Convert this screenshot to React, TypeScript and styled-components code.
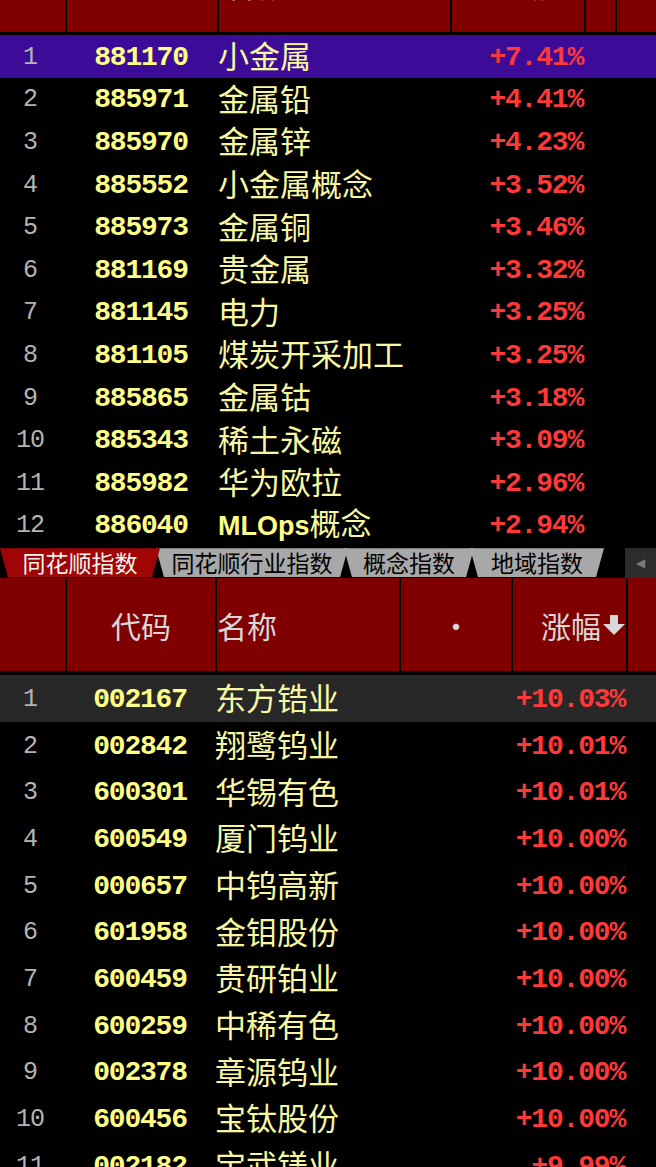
import styled, { createGlobalStyle } from 'styled-components';

const GlobalStyle = createGlobalStyle`
  html, body {
    margin: 0;
    padding: 0;
    background: #000;
    overflow: hidden;
  }
`;

const TOP_COLS = '65px 152px 233px 134px 31px 41px';
const BOTTOM_COLS = '65px 150px 184px 112px 115px 30px';

const topRows: [number, string, string, string][] = [
  [1, '881170', '小金属', '+7.41%'],
  [2, '885971', '金属铅', '+4.41%'],
  [3, '885970', '金属锌', '+4.23%'],
  [4, '885552', '小金属概念', '+3.52%'],
  [5, '885973', '金属铜', '+3.46%'],
  [6, '881169', '贵金属', '+3.32%'],
  [7, '881145', '电力', '+3.25%'],
  [8, '881105', '煤炭开采加工', '+3.25%'],
  [9, '885865', '金属钴', '+3.18%'],
  [10, '885343', '稀土永磁', '+3.09%'],
  [11, '885982', '华为欧拉', '+2.96%'],
  [12, '886040', 'MLOps概念', '+2.94%'],
];

const bottomRows: [number, string, string, string][] = [
  [1, '002167', '东方锆业', '+10.03%'],
  [2, '002842', '翔鹭钨业', '+10.01%'],
  [3, '600301', '华锡有色', '+10.01%'],
  [4, '600549', '厦门钨业', '+10.00%'],
  [5, '000657', '中钨高新', '+10.00%'],
  [6, '601958', '金钼股份', '+10.00%'],
  [7, '600459', '贵研铂业', '+10.00%'],
  [8, '600259', '中稀有色', '+10.00%'],
  [9, '002378', '章源钨业', '+10.00%'],
  [10, '600456', '宝钛股份', '+10.00%'],
  [11, '002182', '宝武镁业', '+9.99%'],
];

const tabs = [
  { label: '同花顺指数', width: 160 },
  { label: '同花顺行业指数', width: 192 },
  { label: '概念指数', width: 130 },
  { label: '地域指数', width: 134 },
];

const CJK = `"Noto Sans CJK SC", "Noto Sans", sans-serif`;
const NUM = `"Liberation Mono", "DejaVu Sans Mono", monospace`;

const Page = styled.div`
  width: 656px;
  height: 1167px;
  overflow: hidden;
  background: #000;
  display: flex;
  flex-direction: column;
`;

const Table = styled.div`
  display: flex;
  flex-direction: column;
`;

const HeaderRow = styled.div<{ $cols: string; $h: number }>`
  display: grid;
  grid-template-columns: ${({ $cols }) => $cols};
  height: ${({ $h }) => $h}px;
  background: #800000;
`;

const TopHeaderRow = styled(HeaderRow)`
  margin-top: -30px;
  margin-bottom: 3px;
`;

const HeadCell = styled.div<{ $align?: string; $pb?: number }>`
  display: flex;
  align-items: center;
  justify-content: ${({ $align }) => $align || 'flex-start'};
  border-left: 2px solid #000;
  padding-bottom: ${({ $pb }) => $pb || 0}px;
  color: #d8d8d8;
  font-family: ${CJK};
  font-size: 30px;
  line-height: 1;
  white-space: nowrap;
  overflow: hidden;
  &:first-child {
    border-left: none;
  }
`;

const Row = styled.div<{ $cols: string; $h: number; $bg?: string }>`
  display: grid;
  grid-template-columns: ${({ $cols }) => $cols};
  height: ${({ $h }) => $h}px;
  background: ${({ $bg }) => $bg || '#000'};
  align-items: center;
  flex-shrink: 0;
  padding-top: 2px;
  box-sizing: border-box;
`;

const Rank = styled.div`
  text-align: center;
  padding-right: 5px;
  color: #b4b4b4;
  font-family: ${NUM};
  font-size: 25px;
  letter-spacing: -1px;
`;

const Code = styled.div`
  text-align: center;
  color: #ffff88;
  font-family: ${NUM};
  font-weight: bold;
  font-size: 28px;
  letter-spacing: -1.2px;
`;

const Name = styled.div<{ $pl: number }>`
  padding-left: ${({ $pl }) => $pl}px;
  padding-bottom: 5px;
  color: #f8f8a4;
  font-family: ${CJK};
  font-size: 31px;
  line-height: 1;
  white-space: nowrap;
`;

const Latin = styled.span`
  font-family: "Liberation Sans", sans-serif;
  font-weight: bold;
  font-size: 27px;
  color: #ffff88;
`;

const Pct = styled.div`
  text-align: right;
  padding-right: 1px;
  color: #ff3838;
  font-family: ${NUM};
  font-weight: bold;
  font-size: 28px;
  letter-spacing: -1.2px;
`;

const TabBar = styled.div`
  height: 34px;
  display: flex;
  align-items: flex-start;
  padding-top: 2px;
  box-sizing: border-box;
  background: #000;
`;

const Tab = styled.div<{ $active?: boolean; $w: number; $first?: boolean }>`
  width: ${({ $w }) => $w}px;
  height: 29px;
  margin-left: ${({ $first }) => ($first ? 0 : -4)}px;
  clip-path: polygon(0 0, 100% 0, calc(100% - 8px) 100%, 8px 100%);
  background: ${({ $active }) => ($active ? '#a00404' : '#a8a8a8')};
  color: ${({ $active }) => ($active ? '#f4f4f4' : '#000')};
  font-family: ${CJK};
  font-size: 23px;
  line-height: 29px;
  text-align: center;
  white-space: nowrap;
  position: relative;
  z-index: ${({ $active }) => ($active ? 2 : 1)};
`;

const ScrollBtn = styled.div`
  margin-left: auto;
  width: 31px;
  height: 30px;
  background: #2c2c2c;
  color: #7a7a7a;
  font-size: 12px;
  display: flex;
  align-items: center;
  justify-content: center;
  font-family: "DejaVu Sans", sans-serif;
`;

const BottomHead = styled(HeaderRow)`
  margin-bottom: 4px;
`;

const SortArrow = () => (
  <svg width="24" height="24" viewBox="0 0 24 24" style={{ marginLeft: 1 }}>
    <rect x="8" y="2" width="8" height="10" fill="#d8d8d8" />
    <polygon points="1,11 23,11 12,22" fill="#d8d8d8" />
  </svg>
);

const renderName = (name: string) => {
  const m = name.match(/^([A-Za-z]+)(.*)$/);
  if (m) {
    return (
      <>
        <Latin>{m[1]}</Latin>
        {m[2]}
      </>
    );
  }
  return name;
};

export default function App() {
  return (
    <Page>
      <GlobalStyle />
      <Table>
        <TopHeaderRow $cols={TOP_COLS} $h={62}>
          <HeadCell $pb={34} />
          <HeadCell $align="center" $pb={34}>代码</HeadCell>
          <HeadCell $pb={34} style={{ paddingLeft: 6 }}>名称</HeadCell>
          <HeadCell $align="flex-end" $pb={34} style={{ paddingRight: 26 }}>涨幅</HeadCell>
          <HeadCell $pb={34} />
          <HeadCell $pb={34} />
        </TopHeaderRow>
        {topRows.map(([rank, code, name, pct]) => (
          <Row key={code} $cols={TOP_COLS} $h={42.6} $bg={rank === 1 ? '#3c0c98' : undefined}>
            <Rank>{rank}</Rank>
            <Code>{code}</Code>
            <Name $pl={1}>{renderName(name)}</Name>
            <Pct>{pct}</Pct>
            <div />
            <div />
          </Row>
        ))}
      </Table>
      <TabBar>
        {tabs.map((t, i) => (
          <Tab key={t.label} $w={t.width} $active={i === 0} $first={i === 0}>
            {t.label}
          </Tab>
        ))}
        <ScrollBtn>◀</ScrollBtn>
      </TabBar>
      <Table>
        <BottomHead $cols={BOTTOM_COLS} $h={93}>
          <HeadCell />
          <HeadCell $align="center">代码</HeadCell>
          <HeadCell>名称</HeadCell>
          <HeadCell $align="center">·</HeadCell>
          <HeadCell $align="flex-end">
            涨幅
            <SortArrow />
          </HeadCell>
          <HeadCell />
        </BottomHead>
        {bottomRows.map(([rank, code, name, pct]) => (
          <Row key={code} $cols={BOTTOM_COLS} $h={46.67} $bg={rank === 1 ? '#282828' : undefined}>
            <Rank>{rank}</Rank>
            <Code>{code}</Code>
            <Name $pl={0}>{name}</Name>
            <div />
            <Pct>{pct}</Pct>
            <div />
          </Row>
        ))}
      </Table>
    </Page>
  );
}
